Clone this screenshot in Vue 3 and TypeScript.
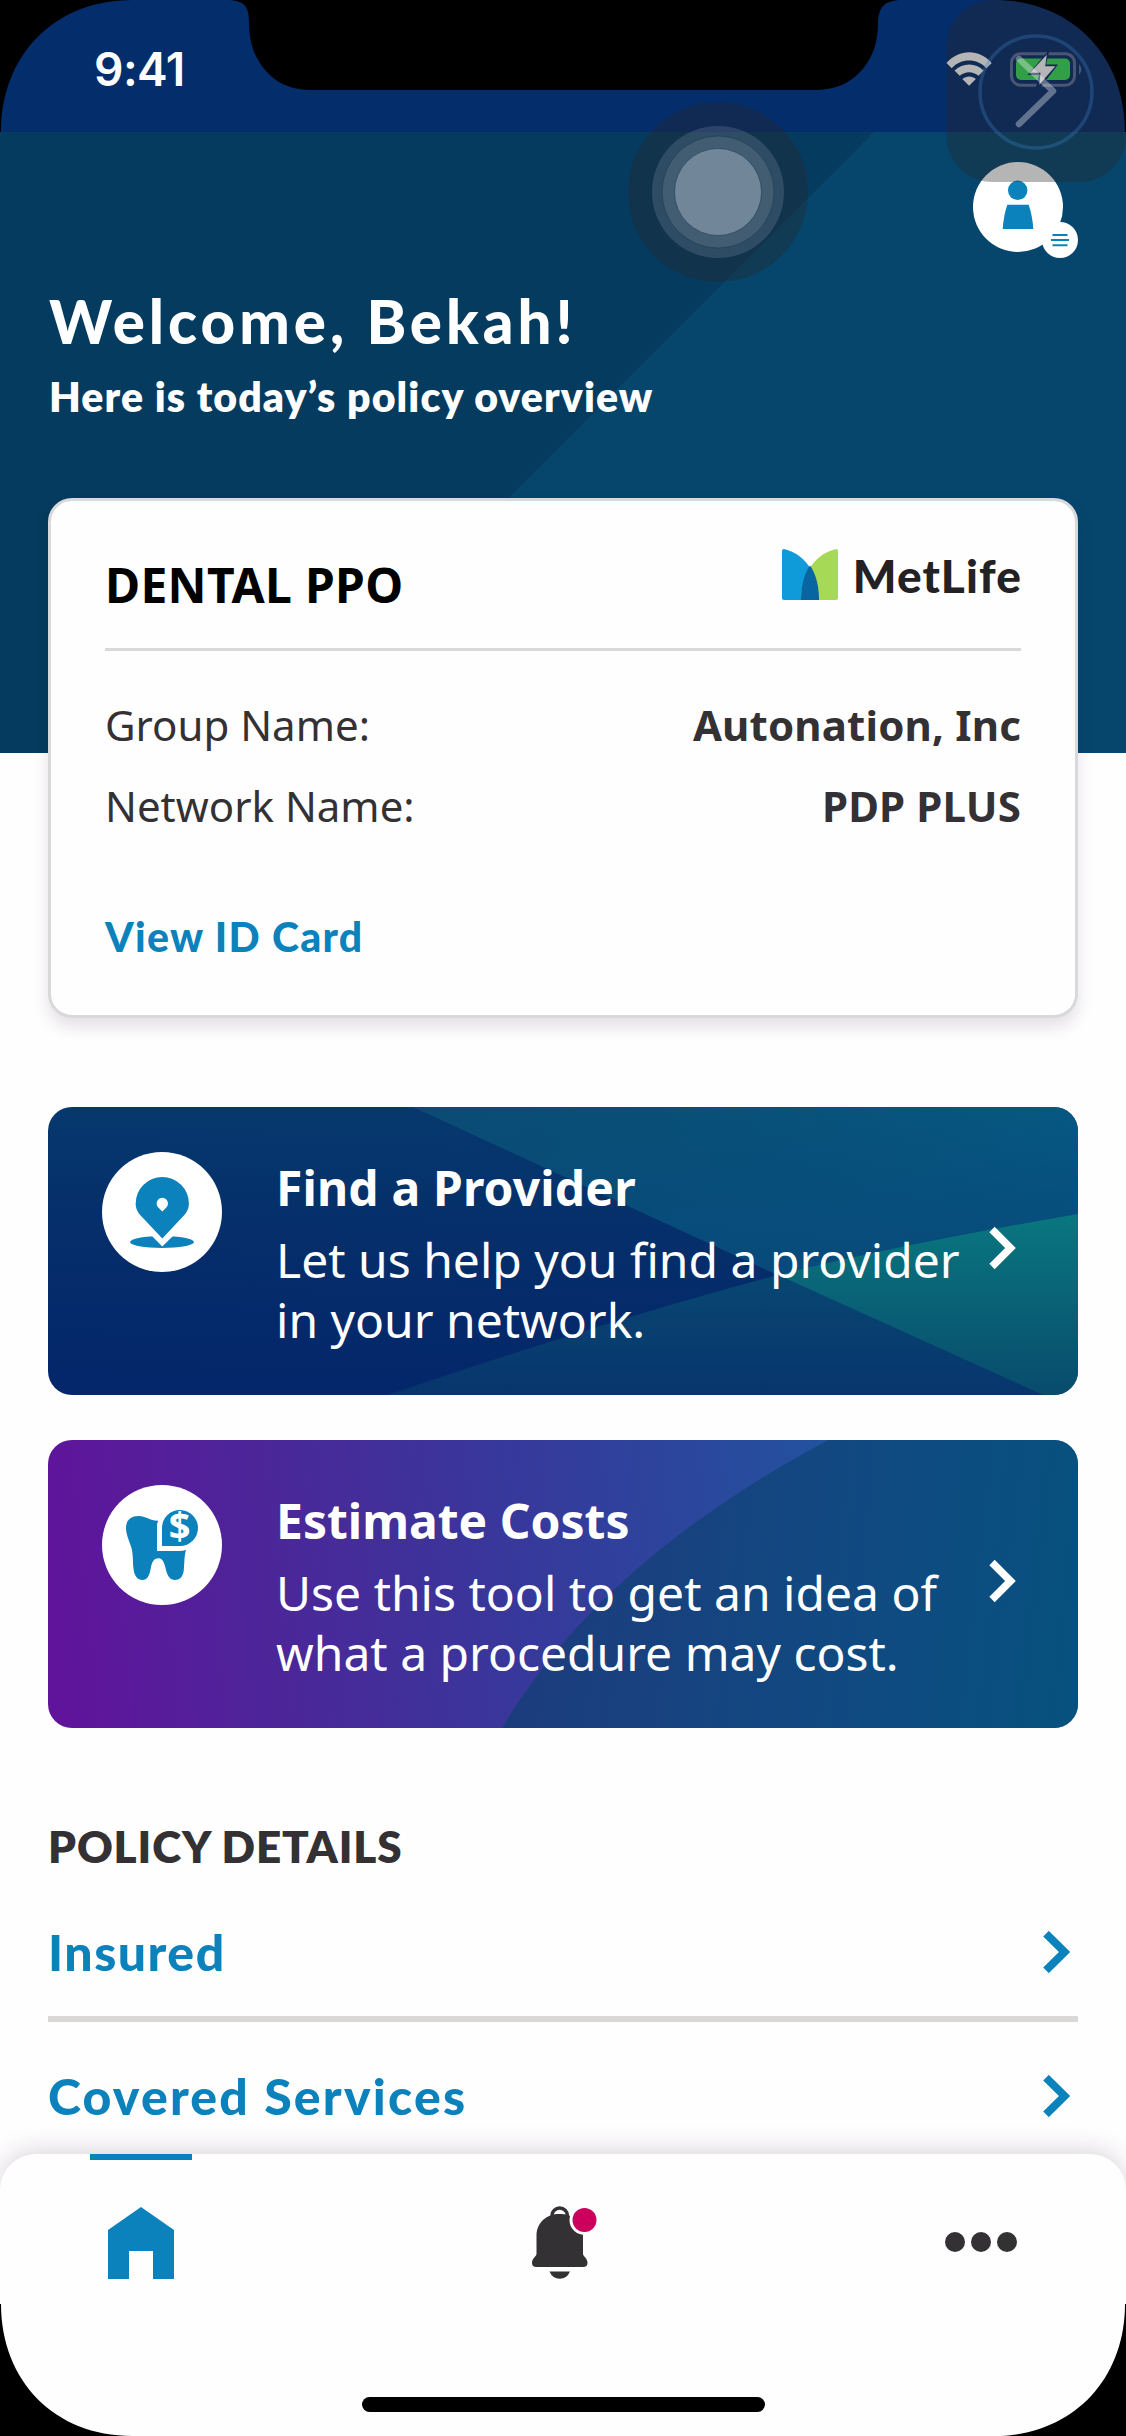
<script setup lang="ts">
interface Detail {
  label: string
  value: string
}
interface Tile {
  kind: 'provider' | 'costs'
  title: string
  lines: string[]
}

const details: Detail[] = [
  { label: 'Group Name:', value: 'Autonation, Inc' },
  { label: 'Network Name:', value: 'PDP PLUS' },
]

const tiles: Tile[] = [
  { kind: 'provider', title: 'Find a Provider', lines: ['Let us help you find a provider', 'in your network.'] },
  { kind: 'costs', title: 'Estimate Costs', lines: ['Use this tool to get an idea of', 'what a procedure may cost.'] },
]

const policyLinks: { label: string; cls: string }[] = [
  { label: 'Insured', cls: 'insured' },
  { label: 'Covered Services', cls: 'covered' },
]
</script>

<template>
  <div class="phone">
    <div class="status">
      <span class="clock">9:41</span>
      <svg class="signals" width="140" height="36" viewBox="0 0 140 36">
        <!-- wifi -->
        <g fill="#fff">
          <path d="M0.5 11 C13 -3.5 33.5 -3.5 45.7 11 L40.5 16.3 C31 6 15 6 5.700 16.300 Z" />
          <path d="M8.500 18.600 C16.500 10.500 30 10.500 37.700 18.600 L32.500 23.800 C27 19 19 19 13.700 23.800 Z" />
          <path d="M16.300 27 C20 23.500 26.500 23.500 29.900 27 L23.100 33.700 Z" />
        </g>
        <!-- battery -->
        <rect x="65.500" y="1.700" width="63" height="31.500" rx="9" fill="none" stroke="#5b6f99" stroke-width="3" />
        <rect x="70" y="6.500" width="54" height="21.500" rx="5" fill="#38dd56" />
        <path d="M133 12 Q137.500 17.500 133 23 Z" fill="#5b6f99" />
        <path d="M101.500 0 L81.500 23 L93 23 L90 35 L95 35 L112 12.500 L100 12.500 L103 0 Z" fill="#04286a" />
        <path d="M100.800 2.800 L84 20.800 L94.500 20.800 L93.300 32.800 L109.300 14.200 L99.200 14.200 Z" fill="#fff" />
      </svg>
    </div>

    <header class="hero">
      <svg class="hero-bg" width="1126" height="621" viewBox="0 0 1126 621">
        <path d="M874 0 H1126 V621 H254 Z" fill="#06466d" />
      </svg>
      <svg class="avatar" width="106" height="98" viewBox="0 0 106 98">
        <circle cx="45" cy="45" r="45" fill="#fff" />
        <circle cx="44.700" cy="28.300" r="9.700" fill="#0b82bb" />
        <path d="M34.300 42.700 H55.700 Q59.500 54 60.300 67 H29.700 Q30.500 54 34.300 42.700 Z" fill="#0b82bb" />
        <circle cx="87" cy="78" r="18" fill="#fff" />
        <path d="M79.500 73 H94.500 M78 78 H96 M79.500 83.300 H94.500" stroke="#0b82bb" stroke-width="2" />
      </svg>
      <h1 class="welcome">Welcome, Bekah!</h1>
      <p class="overview">Here is today’s policy overview</p>
    </header>

    <main>
      <section class="card">
        <div class="card-head">
          <h2>DENTAL PPO</h2>
          <div class="brand">
            <svg width="56" height="51" viewBox="0 0 56 51">
              <path d="M2 0 C20 4 37 22 37 51 H2 Q0 51 0 49 V2 Q0 0 2 0 Z" fill="#0f9bd9" />
              <path d="M54 0 C36 4 19 22 19 51 H54 Q56 51 56 49 V2 Q56 0 54 0 Z" fill="#a6da56" />
              <path d="M28 16.500 C34 25 37 37 37 51 H19 C19 37 22 25 28 16.500 Z" fill="#0765a1" />
            </svg>
            <span class="brand-name">MetLife</span>
          </div>
        </div>
        <div v-for="d in details" :key="d.label" class="detail">
          <span>{{ d.label }}</span>
          <strong>{{ d.value }}</strong>
        </div>
        <a class="view-card">View ID Card</a>
      </section>

      <section v-for="t in tiles" :key="t.kind" class="tile" :class="t.kind">
        <svg v-if="t.kind === 'provider'" class="tile-bg" width="1030" height="288" viewBox="0 0 1030 288">
          <defs>
            <linearGradient id="pBase" x1="0.200" y1="0" x2="0.100" y2="1">
              <stop offset="0" stop-color="#06386d" /><stop offset="0.500" stop-color="#052d6a" /><stop offset="1" stop-color="#04266b" />
            </linearGradient>
            <linearGradient id="pTop" x1="0" y1="0" x2="1" y2="0">
              <stop offset="0" stop-color="#0a4b72" /><stop offset="1" stop-color="#065882" />
            </linearGradient>
            <linearGradient id="pTopShade" x1="0" y1="0" x2="0" y2="1">
              <stop offset="0" stop-color="#074a7b" stop-opacity="0" /><stop offset="1" stop-color="#074a7b" />
            </linearGradient>
            <linearGradient id="pLow" x1="0" y1="0" x2="0" y2="1">
              <stop offset="0" stop-color="#084772" /><stop offset="1" stop-color="#07356d" />
            </linearGradient>
            <linearGradient id="pTeal" x1="0" y1="0" x2="0" y2="1">
              <stop offset="0" stop-color="#09777f" /><stop offset="1" stop-color="#094b6d" />
            </linearGradient>
          </defs>
          <rect width="1030" height="288" fill="url(#pBase)" />
          <path d="M365 0 H1030 V107 Q850 140 730 168 Z" fill="url(#pTop)" />
          <path d="M365 0 H1030 V107 Q850 140 730 168 Z" fill="url(#pTopShade)" />
          <path d="M340 288 Q570 210 730 168 L995 288 Z" fill="url(#pLow)" />
          <path d="M730 168 Q850 138 1030 107 V288 H995 Z" fill="url(#pTeal)" />
        </svg>
        <svg v-else class="tile-bg" width="1030" height="288" viewBox="0 0 1030 288">
          <defs>
            <linearGradient id="cBase" gradientUnits="userSpaceOnUse" x1="0" y1="60" x2="780" y2="-20">
              <stop offset="0" stop-color="#5f149b" /><stop offset="0.300" stop-color="#4a2899" /><stop offset="0.600" stop-color="#36399b" /><stop offset="1" stop-color="#22529f" />
            </linearGradient>
            <linearGradient id="cDark" gradientUnits="userSpaceOnUse" x1="500" y1="100" x2="1030" y2="160">
              <stop offset="0" stop-color="#1c3d7d" /><stop offset="0.600" stop-color="#104a81" /><stop offset="1" stop-color="#07517e" />
            </linearGradient>
          </defs>
          <rect width="1030" height="288" fill="url(#cBase)" />
          <path d="M454 288 C530 160 650 70 780 0 H1030 V288 Z" fill="url(#cDark)" />
        </svg>

        <svg v-if="t.kind === 'provider'" class="tile-icon" width="120" height="120" viewBox="0 0 120 120">
          <circle cx="60" cy="60" r="60" fill="#fff" />
          <ellipse cx="60" cy="90" rx="32" ry="6" fill="#0b82bb" />
          <path d="M46 80 L60.300 94.500 L75 80 Z" fill="#fff" />
          <path d="M60.300 86.500 L41 66 C36 61 33.700 57 33.700 51.500 A26.600 26.600 0 0 1 86.900 51.500 C86.900 57 84.500 61 79.500 66 Z" fill="#0b82bb" />
          <path d="M60.300 59.500 L56.500 55.800 A5.700 5.700 0 1 1 64.100 55.800 Z" fill="#fff" />
        </svg>
        <svg v-else class="tile-icon" width="120" height="120" viewBox="0 0 120 120">
          <circle cx="60" cy="60" r="60" fill="#fff" />
          <path
            d="M24 43 C24 35 29 31 36.500 31 C44 31 48 36 56.500 35.700 C55.300 37.500 55 39 55 41 V66 H77 Q81 66 84 65 C82 71 82.500 80 81.500 87 C80.500 92 77.500 95 73 95 C68 95 65.500 91 64 85 C62.500 78.500 61 73.300 56.700 73.300 C51 73.300 50 78 48.800 83 C47.500 91 45 95 40.700 95 C35.500 95 32.500 91 31.700 85 C30.500 78 31.500 71 29.500 63 C27.500 56 24 50 24 43 Z"
            fill="#0b82bb"
          />
          <path d="M60 61 V42.700 A18 18 0 1 1 78 61 Z" fill="#0b82bb" />
          <text x="77.500" y="55" text-anchor="middle" class="dollar">$</text>
        </svg>

        <div class="tile-copy">
          <h3>{{ t.title }}</h3>
          <p v-for="line in t.lines" :key="line">{{ line }}</p>
        </div>
        <svg class="tile-arrow" width="28" height="44" viewBox="0 0 28 44">
          <path d="M3 3.500 L21.500 22 L3 40.500" fill="none" stroke="#fff" stroke-width="7.500" />
        </svg>
      </section>

      <section class="policy">
        <h2>POLICY DETAILS</h2>
        <a v-for="link in policyLinks" :key="link.label" class="policy-row">
          <span :class="link.cls">{{ link.label }}</span>
          <svg width="28" height="42" viewBox="0 0 28 42">
            <path d="M3 2.700 L21.500 21 L3 39.300" fill="none" stroke="#0b82bb" stroke-width="8" />
          </svg>
        </a>
      </section>
    </main>

    <nav class="tabbar">
      <span class="active-mark"></span>
      <svg class="home" width="66" height="72" viewBox="0 0 66 72">
        <path d="M33 0 L66 23 V72 H45 V44 H21 V72 H0 V23 Z" fill="#0b82bb" />
      </svg>
      <svg class="bell" width="70" height="76" viewBox="0 0 70 76">
        <path d="M20 12 V9.500 A7.700 7.500 0 0 1 35.400 9.500 V12" fill="none" stroke="#333134" stroke-width="3.500" />
        <path d="M4.500 30 C4.500 16 15 8 27.500 8 C41 8 51 16 51 30 V48 C51.500 51 55.500 52 55.500 57 Q55.500 61 51 61 H4.500 Q0 61 0 57 C0 52 4 51 4.500 48 Z" fill="#333134" />
        <path d="M17.500 65.500 H38 Q35 72.700 27.700 72.700 Q20.500 72.700 17.500 65.500 Z" fill="#333134" />
        <circle cx="52.500" cy="14" r="15" fill="#fffeff" />
        <circle cx="52.500" cy="14" r="12" fill="#cc005c" />
      </svg>
      <svg class="more" width="72" height="20" viewBox="0 0 72 20">
        <circle cx="10" cy="10" r="10" fill="#333134" />
        <circle cx="36" cy="10" r="10" fill="#333134" />
        <circle cx="62" cy="10" r="10" fill="#333134" />
      </svg>
      <span class="home-indicator"></span>
    </nav>

    <!-- floating system controls and the device bezel -->
    <svg class="overlay" width="1126" height="2436" viewBox="0 0 1126 2436">
      <rect x="946.500" y="0" width="179.500" height="182" rx="46" fill="#2a262a" fill-opacity="0.340" />
      <circle cx="1036" cy="92" r="56" fill="none" stroke="#3f83c8" stroke-opacity="0.300" stroke-width="3.500" />
      <path d="M1019 59 L1053 91 L1019 124" fill="none" stroke="#fff" stroke-opacity="0.340" stroke-width="6.500" stroke-linecap="round" stroke-linejoin="round" />
      <circle cx="718" cy="192" r="90" fill="#2a262a" fill-opacity="0.340" />
      <circle cx="718" cy="192" r="66" fill="#f4f4ff" fill-opacity="0.130" />
      <circle cx="718" cy="192" r="56" fill="#f4f4ff" fill-opacity="0.100" stroke="#12334f" stroke-opacity="0.500" stroke-width="1" />
      <circle cx="718" cy="192" r="43.500" fill="#f0f0ff" fill-opacity="0.280" stroke="#12334f" stroke-opacity="0.500" stroke-width="1" />
      <path d="M226 0 C244 0 249 6 249 22 C249 34 251 46 255 54 C265 76 284 90 310 90 H816 C843 90 862 76 872 54 C876 46 878 34 878 22 C879 6 885 0 903 0 Z" fill="#000" />
      <path d="M0 0 H132 C55 0 1 55 1 132 H0 Z M1126 0 H994 C1071 0 1125 55 1125 132 H1126 Z" fill="#000" />
      <path d="M0 2436 H132 C55 2436 1 2381 1 2304 H0 Z M1126 2436 H994 C1071 2436 1125 2381 1125 2304 H1126 Z" fill="#000" />
    </svg>
  </div>
</template>

<style>
body {
  margin: 0;
  background: #fffeff;
}
</style>

<style scoped>
.phone {
  position: relative;
  width: 1126px;
  height: 2436px;
  overflow: hidden;
  display: flex;
  flex-direction: column;
  background: #fffeff;
  font-family: 'Noto Sans', sans-serif;
}
h1, h2, h3, p {
  margin: 0;
  white-space: nowrap;
}
.status {
  flex: none;
  box-sizing: border-box;
  height: 132px;
  padding: 0 39px 0 94px;
  background: #042d6b;
  display: flex;
  justify-content: space-between;
}
.clock {
  margin-top: 39px;
  font: 600 46px/60px Inter, sans-serif;
  color: #fff;
  letter-spacing: -0.5px;
}
.signals {
  margin-top: 52px;
  margin-right: 1px;
}
.hero {
  flex: none;
  position: relative;
  box-sizing: border-box;
  height: 621px;
  padding-left: 49px;
  background: #053b5e;
  color: #fff;
  font-family: Lato, sans-serif;
}
.hero-bg,
.tile-bg {
  position: absolute;
  left: 0;
  top: 0;
}
.avatar {
  position: absolute;
  left: 973px;
  top: 30px;
}
.welcome {
  position: relative;
  padding-top: 153px;
  font-size: 60px;
  line-height: 72px;
  font-weight: 900;
  letter-spacing: 4px;
}
.overview {
  position: relative;
  padding-top: 15px;
  font-size: 41px;
  line-height: 50px;
  font-weight: 800;
  letter-spacing: 1.1px;
}
main {
  flex: 1;
  min-height: 0;
  padding: 0 48px;
  margin-top: -255px;
  position: relative;
}
.card {
  box-sizing: border-box;
  height: 520px;
  margin-bottom: 89px;
  padding: 0 54px;
  border: 3px solid #d9d8da;
  border-radius: 24px;
  background: #fffeff;
  box-shadow: 0 9px 16px rgba(40, 20, 40, 0.13);
  color: #333134;
}
.card-head {
  box-sizing: border-box;
  height: 150px;
  border-bottom: 3px solid #d9d8da;
  margin-bottom: 33px;
  display: flex;
  justify-content: space-between;
}
.card-head h2 {
  margin-top: 51px;
  font-size: 48px;
  line-height: 65px;
  letter-spacing: 0.3px;
  color: #000;
}
.brand {
  display: flex;
  padding-top: 48px;
  gap: 15px;
  height: 51px;
}
.brand-name {
  margin-top: -3px;
  margin-right: -1px;
  font: 900 46px/60px Lato, sans-serif;
  letter-spacing: 1.1px;
  color: #232124;
}
.detail {
  height: 81px;
  line-height: 81px;
  font-size: 42px;
  display: flex;
  justify-content: space-between;
}
.detail strong {
  font-weight: 700;
  letter-spacing: 0.15px;
}
.view-card {
  display: block;
  margin-top: 61px;
  font: 900 41px/60px Lato, sans-serif;
  letter-spacing: 1.3px;
  color: #0b82bb;
}
.tile {
  position: relative;
  height: 288px;
  margin-bottom: 45px;
  border-radius: 24px;
  overflow: hidden;
  display: flex;
  color: #fff;
}
.tile-icon {
  position: relative;
  margin: 45px 0 0 54px;
  flex: none;
}
.dollar {
  font: 700 38px 'Noto Sans', sans-serif;
  fill: #fff;
}
.tile-copy {
  position: relative;
  margin: 45px 1px 0 54px;
  width: 712px;
  font-size: 48px;
  line-height: 60px;
}
.tile-copy h3 {
  padding-bottom: 6px;
  font-size: 48px;
  line-height: 72px;
}
.provider .tile-copy h3 {
  letter-spacing: 0.15px;
}
.tile-arrow {
  position: relative;
  margin-top: 119px;
}
.policy h2 {
  margin-top: 90px;
  font: 800 44px/56px Lato, sans-serif;
  letter-spacing: 0.9px;
  color: #333134;
}
.policy-row {
  box-sizing: border-box;
  height: 144px;
  padding: 10px 7px 0 0;
  display: flex;
  align-items: center;
  justify-content: space-between;
  font: 900 50px/60px Lato, sans-serif;
  letter-spacing: 2.2px;
  color: #0b82bb;
  border-bottom: 6px solid #d9d8d6;
}
.policy-row:first-of-type {
  height: 148px;
  padding-top: 14px;
}
.insured {
  letter-spacing: 1.5px;
}
.tabbar {
  position: absolute;
  left: 0;
  bottom: 0;
  box-sizing: border-box;
  width: 1126px;
  height: 282px;
  padding: 52px 109px 0 108px;
  border-radius: 36px 36px 0 0;
  background: #fffeff;
  box-shadow: 0 -4px 24px rgba(40, 20, 40, 0.17);
  display: flex;
  justify-content: space-between;
  align-items: flex-start;
}
.home {
  margin-top: 1px;
}
.bell {
  margin-left: 15px;
}
.more {
  margin-top: 26px;
}
.active-mark {
  position: absolute;
  left: 90px;
  top: 0;
  width: 102px;
  height: 6px;
  background: #0b82bb;
}
.home-indicator {
  position: absolute;
  left: 362px;
  bottom: 24px;
  width: 403px;
  height: 15px;
  border-radius: 8px;
  background: #000;
}
.overlay {
  position: absolute;
  left: 0;
  top: 0;
}
</style>
